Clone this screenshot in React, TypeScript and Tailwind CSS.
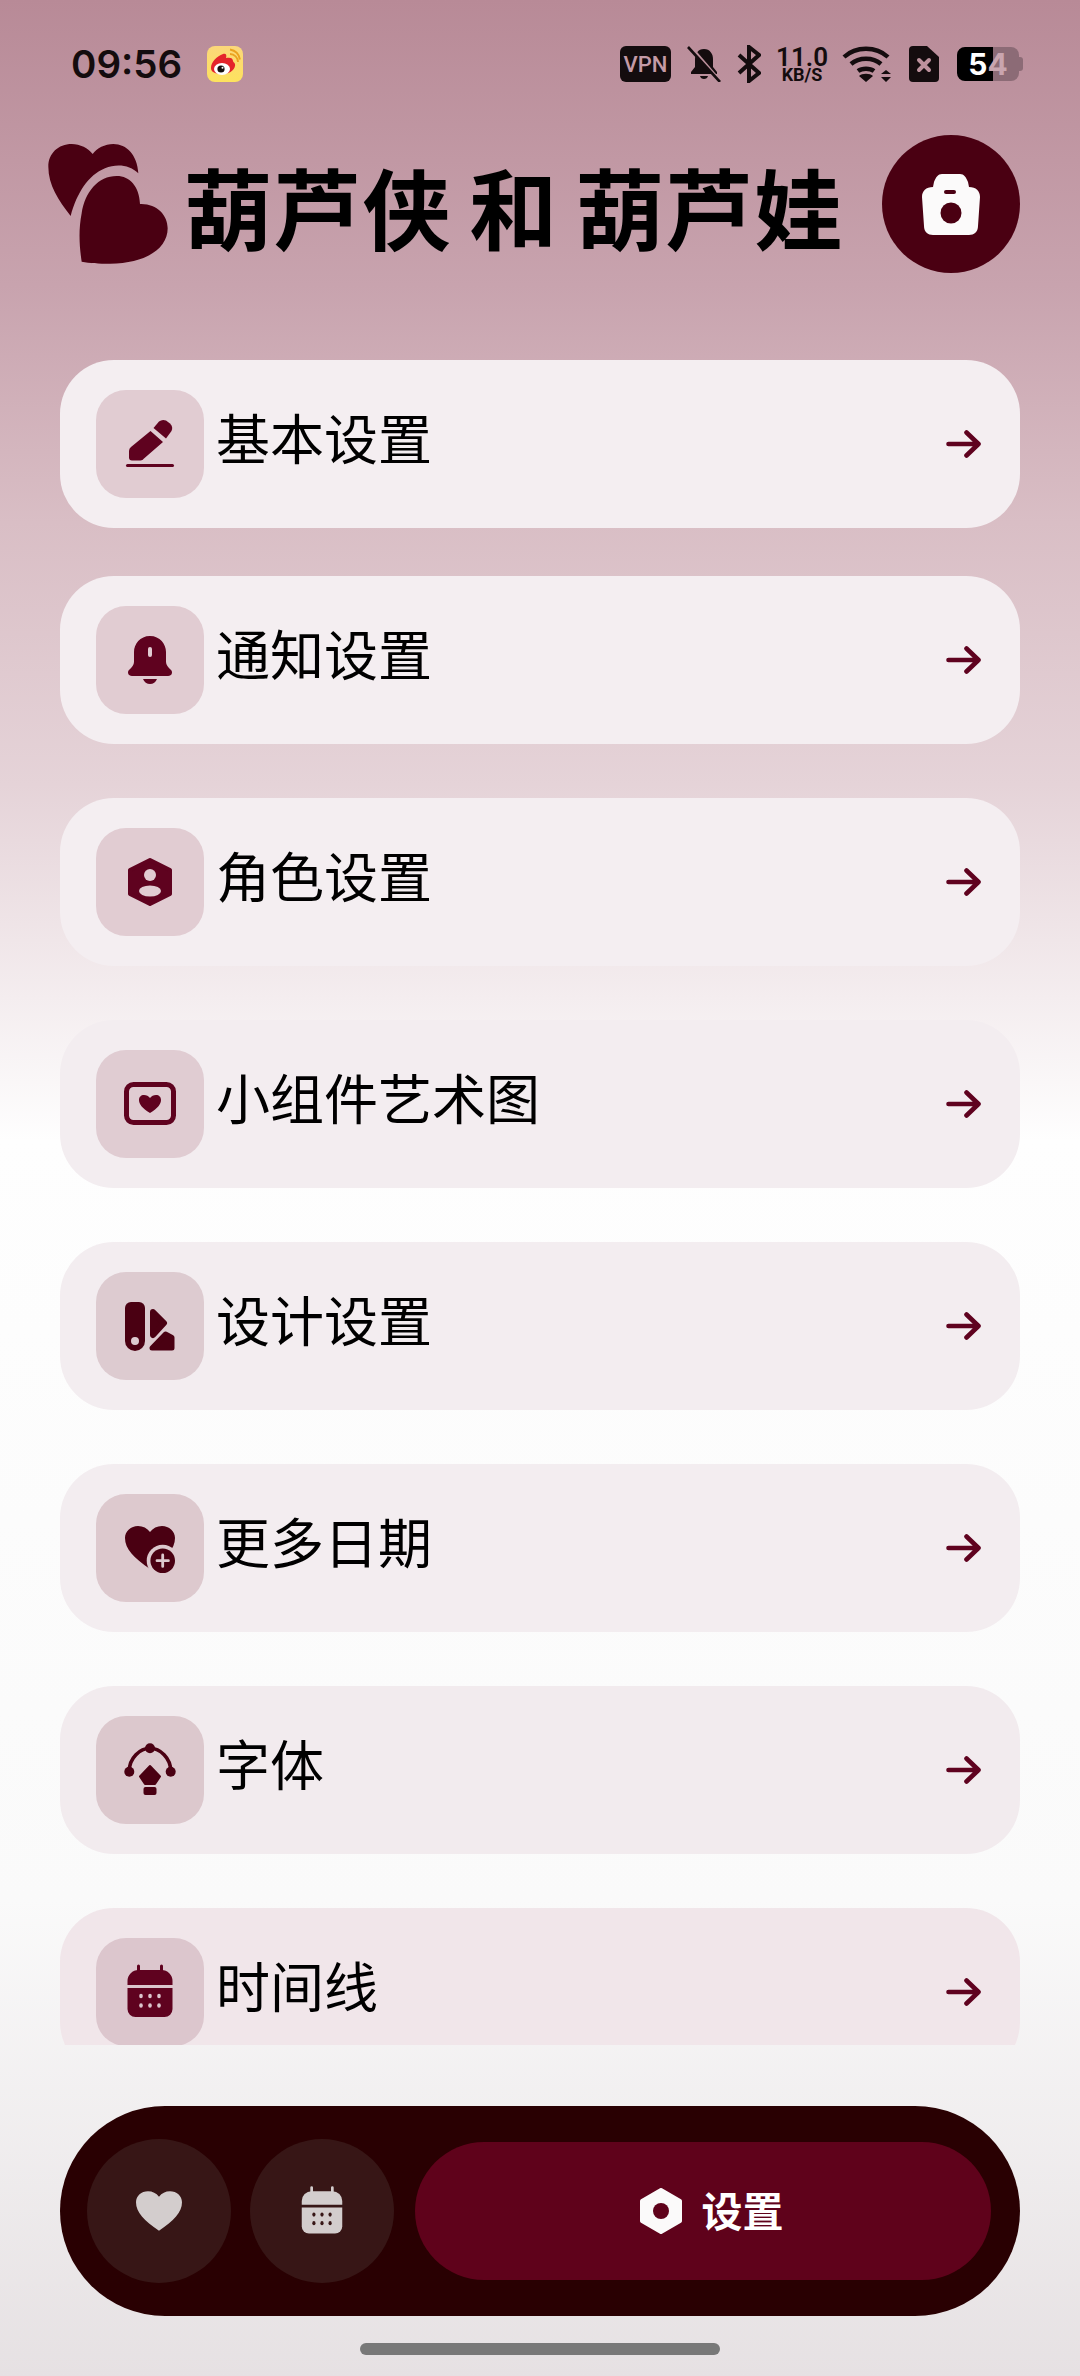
import React from 'react';

const ICON = '#5f021f';

function Svg({ children, size = 60 }: { children: React.ReactNode; size?: number }) {
  return (
    <svg width={size} height={size} viewBox="-6 -6 60 60" className="shrink-0">
      {children}
    </svg>
  );
}

function PencilIcon() {
  return (
    <Svg>
      <path fill={ICON} d="M6 40.500a3 3 0 0 1-3-3V31a5 5 0 0 1 2-4L24.500 11 37 22 18 38.500a5 5 0 0 1-3.500 2z" />
      <path fill={ICON} d="M27.500 8L33 1.500Q36-1 40 .5L44 3.500Q47.500 7 45.500 11L40 18.500z" />
      <rect x="0" y="44" width="48" height="3" rx="1.500" fill={ICON} />
    </Svg>
  );
}

function BellIcon({ hole }: { hole: string }) {
  return (
    <Svg>
      <path fill={ICON} d="M24 0C14 0 8 8 8 16v10c0 3-2 5-5 8-2 2-1 6 3 6h36c4 0 5-4 3-6-3-3-5-5-5-8V16C40 8 34 0 24 0z" />
      <rect x="22" y="11" width="4" height="10" rx="2" fill={hole} />
      <path fill={ICON} d="M17 43h14c-1 3-4 5-7 5s-6-2-7-5z" />
    </Svg>
  );
}

function RoleIcon({ hole }: { hole: string }) {
  return (
    <Svg>
      <path fill={ICON} stroke={ICON} strokeWidth="4" strokeLinejoin="round" d="M24 2 L44 12 V36 L24 46 L4 36 V12z" />
      <circle cx="24" cy="17" r="6" fill={hole} />
      <ellipse cx="24" cy="33" rx="11" ry="5.500" fill={hole} />
    </Svg>
  );
}

function WidgetIcon() {
  return (
    <Svg>
      <rect x="0.5" y="4.500" width="47" height="38" rx="7" fill="none" stroke={ICON} strokeWidth="5" />
      <path fill={ICON} d="M24 33c-8-5-11-9-11-13 0-3 2-5 5-5 2.500 0 4.500 1 6 3 1.500-2 3.500-3 6-3 3 0 5 2 5 5 0 4-3 8-11 13z" />
    </Svg>
  );
}

function PaletteIcon({ hole }: { hole: string }) {
  return (
    <Svg>
      <path fill="#4a0012" d="M5 0h8a6 6 0 0 1 6 6v33a10 10 0 0 1-20 0V6a6 6 0 0 1 6-6z" />
      <circle cx="9" cy="39" r="4" fill={hole} />
      <path fill="#4a0012" stroke="#4a0012" strokeWidth="6" strokeLinejoin="round" d="M27 10L38 21 27 33z" />
      <path fill="#4a0012" stroke="#4a0012" strokeWidth="5" strokeLinejoin="round" d="M26 46L39.500 32 46 35.500V46z" />
    </Svg>
  );
}

function HeartPlusIcon({ hole }: { hole: string }) {
  return (
    <Svg>
      <path fill="#4a0012" d="M24 45C8 34-1 25-1 14-1 7 5 2 12 2c5 0 9 2 12 6 3-4 7-6 12-6 7 0 13 5 13 12 0 11-9 20-25 31z" />
      <circle cx="36.700" cy="36.700" r="16" fill={hole} />
      <circle cx="36.700" cy="36.700" r="12.300" fill="#4a0012" />
      <path stroke={hole} strokeWidth="2.800" strokeLinecap="round" d="M31 36.700h11.400M36.700 31v11.400" />
    </Svg>
  );
}

function FontIcon() {
  return (
    <Svg>
      <path fill="none" stroke="#4a0012" strokeWidth="3.600" d="M3.300 25C3.300 12 14 2.300 24 2.300S44.700 12 44.700 25" />
      <circle cx="24" cy="2.300" r="5" fill="#4a0012" />
      <circle cx="3.300" cy="25.700" r="5" fill="#4a0012" />
      <circle cx="44.700" cy="25.700" r="5" fill="#4a0012" />
      <path fill="#4a0012" stroke="#4a0012" strokeWidth="2" strokeLinejoin="round" d="M24 20L34 30.500 29 38H19L14 30.500z" />
      <rect x="17.500" y="41" width="13" height="8" rx="2" fill="#4a0012" />
    </Svg>
  );
}

function CalendarIcon({ color, hole, size = 60 }: { color: string; hole: string; size?: number }) {
  return (
    <Svg size={size}>
      <path stroke={color} strokeWidth="3" strokeLinecap="round" d="M12.500-2v6M35.500-2v6" />
      <path fill={color} d="M1.500 17v-4a11 11 0 0 1 11-11h23a11 11 0 0 1 11 11v4z" />
      <path fill={color} d="M1.500 20h45v21a8 8 0 0 1-8 8h-29a8 8 0 0 1-8-8z" />
      {[15, 24, 33].map((x) => (
        <React.Fragment key={x}>
          <ellipse cx={x} cy="28" rx="1.800" ry="2.300" fill={hole} />
          <ellipse cx={x} cy="37.500" rx="1.800" ry="2.300" fill={hole} />
        </React.Fragment>
      ))}
    </Svg>
  );
}

function ArrowRight() {
  return (
    <svg width="36" height="28" viewBox="0 0 36 28" fill="none" stroke={ICON} strokeWidth="4.600" strokeLinecap="round" strokeLinejoin="round" className="shrink-0">
      <path d="M2.500 14h30M20.500 2.500L32.500 14 20.500 25.500" />
    </svg>
  );
}

const items = [
  { label: '基本设置', card: 'bg-[#f4eef1]', box: 'bg-[#e1ccd2]', hole: '#e1ccd2', icon: 'pencil' },
  { label: '通知设置', card: 'bg-[#f4eef1]', box: 'bg-[#e1ccd2]', hole: '#e1ccd2', icon: 'bell' },
  { label: '角色设置', card: 'bg-[#f4eef1]', box: 'bg-[#e1ccd2]', hole: '#e1ccd2', icon: 'role' },
  { label: '小组件艺术图', card: 'bg-[#f3edf0]', box: 'bg-[#e0ccd2]', hole: '#e0ccd2', icon: 'widget' },
  { label: '设计设置', card: 'bg-[#f3edf0]', box: 'bg-[#ddcbd0]', hole: '#ddcbd0', icon: 'palette' },
  { label: '更多日期', card: 'bg-[#f3edf0]', box: 'bg-[#ddc9ce]', hole: '#ddc9ce', icon: 'heart' },
  { label: '字体', card: 'bg-[#f2ebee]', box: 'bg-[#dcc8cd]', hole: '#dcc8cd', icon: 'font' },
  { label: '时间线', card: 'bg-[#f1e6ea]', box: 'bg-[#dcc6cd]', hole: '#dcc6cd', icon: 'calendar' },
];

function ItemIcon({ icon, hole }: { icon: string; hole: string }) {
  switch (icon) {
    case 'pencil':
      return <PencilIcon />;
    case 'bell':
      return <BellIcon hole={hole} />;
    case 'role':
      return <RoleIcon hole={hole} />;
    case 'widget':
      return <WidgetIcon />;
    case 'palette':
      return <PaletteIcon hole={hole} />;
    case 'heart':
      return <HeartPlusIcon hole={hole} />;
    case 'font':
      return <FontIcon />;
    default:
      return <CalendarIcon color={ICON} hole={hole} />;
  }
}

function WeiboIcon() {
  return (
    <svg width="36" height="36" viewBox="0 0 36 36" className="shrink-0">
      <defs>
        <linearGradient id="wb" x1="0" y1="0" x2="0" y2="1">
          <stop offset="0" stopColor="#fbd77a" />
          <stop offset="1" stopColor="#fde25e" />
        </linearGradient>
      </defs>
      <rect width="36" height="36" rx="8" fill="url(#wb)" />
      <path fill="#e4242a" d="M4 22c0-6 6-12 12-14 3-1 4 1 3 4 4-1 7 0 7 3 0 1 1 1 2 3 1 4-4 10-12 10S4 26 4 22z" />
      <ellipse cx="15" cy="23" rx="8" ry="6" fill="#fff" />
      <circle cx="14" cy="23" r="3.600" fill="#16100f" />
      <circle cx="15.500" cy="21.700" r="1" fill="#fff" />
      <path fill="none" stroke="#eba21f" strokeWidth="1.800" d="M23 8a8 8 0 0 1 8 8M23 3.500a12.500 12.500 0 0 1 10 10" />
    </svg>
  );
}

function StatusBar() {
  return (
    <div className="mt-[46px] flex h-[36px] items-center pl-[71px] pr-[57px] font-['Inter',sans-serif] text-[#140c0e]">
      <span className="w-[136px] text-[38.5px] font-semibold leading-none">09:56</span>
      <WeiboIcon />
      <div className="ml-auto flex items-center">
        <div className="flex h-[36px] w-[51px] items-center justify-center rounded-[6px] bg-[#140c0e] font-['Roboto',sans-serif] text-[22px] font-medium text-[#c49aa6]">
          VPN
        </div>
        <svg width="36" height="36" viewBox="0 0 36 36" className="ml-[15px]">
          <path fill="#140c0e" d="M18 3c-6 0-9 5-9 10v8l-4 5v2h26v-2l-4-5v-8c0-5-3-10-9-10z" />
          <path fill="#140c0e" d="M14 30h8c-.5 2-2 3-4 3s-3.500-1-4-3z" />
          <path stroke="#bd919d" strokeWidth="3" d="M4 0l30 35" />
          <path stroke="#140c0e" strokeWidth="2.600" d="M2 1l32 35" />
        </svg>
        <svg width="24" height="38" viewBox="0 0 24 38" fill="none" stroke="#140c0e" strokeWidth="4" className="ml-[15px]">
          <path d="M2 10l20 18-10 8V2l10 8L2 28" />
        </svg>
        <div className="ml-[16px] flex w-[50px] flex-col items-center font-['Roboto',sans-serif] font-semibold">
          <span className="text-[26px] leading-[22px]">11.0</span>
          <span className="text-[18px] font-bold leading-[14px]">KB/S</span>
        </div>
        <svg width="52" height="36" viewBox="0 0 52 36" fill="none" stroke="#140c0e" strokeWidth="4.400" className="ml-[15px]">
          <path d="M2 11c12-11 32-11 44 0M9 18c8-7 22-7 30 0M16 25c4-3 12-3 16 0" />
          <path fill="#140c0e" stroke="none" d="M24 36l-7-6c3-3 11-3 14 0zM44 24l5 4h-10zM44 36l-5-5h10z" />
        </svg>
        <svg width="30" height="36" viewBox="0 0 30 36" className="ml-[15px]">
          <path fill="#140c0e" d="M4 0h14l12 11v21a4 4 0 0 1-4 4H4a4 4 0 0 1-4-4V4a4 4 0 0 1 4-4z" />
          <path stroke="#bd919d" strokeWidth="4" strokeLinecap="round" d="M10 14l10 10M20 14L10 24" />
        </svg>
        <div className="ml-[18px] flex h-[34px] w-[62px] items-center justify-center rounded-[8px] bg-[linear-gradient(90deg,#000_58%,#8c6b76_58%)] text-[30px] font-bold leading-none">
          <span className="text-white">5</span>
          <span className="text-[#c9a5af]">4</span>
        </div>
        <div className="h-[14px] w-[4px] rounded-r-[3px] bg-[#8c6b76]" />
      </div>
    </div>
  );
}

function Header() {
  return (
    <div className="mt-[53px] flex h-[138px] items-center pl-[48px] pr-[60px]">
      <svg width="120" height="120" viewBox="54 72 360 360" className="shrink-0">
        <path fill="#4a0012" d="M122 288C85 240 55 195 55 140 55 100 85 72 125 72c25 0 50 13 63 30 12-17 37-30 62-30 40 0 72 33 75 88-25-25-65-30-100-15-50 20-85 75-103 143z" />
        <path fill="#4a0012" d="M155 425c-7-45-10-95 0-145 10-65 50-112 105-112 40 0 68 32 70 84 50-2 83 33 83 73 0 60-63 105-173 106-35 0-60-1-85-6z" />
      </svg>
      <h1 className="ml-[16px] whitespace-pre pt-[2px] text-[88px] font-bold leading-none tracking-[1.3px] text-black [word-spacing:-4px]">
        葫芦侠 和 葫芦娃
      </h1>
      <div className="ml-auto flex h-[138px] w-[138px] items-center justify-center rounded-full bg-[#4a0012]">
        <svg width="58" height="61" viewBox="0 0 58 61">
          <path fill="#fbfafa" d="M20 0h18c4 0 6 3 8 8l1 5c7 0 11 4 11 10l-2 29c0 6-4 9-9 9H11c-5 0-9-3-9-9L0 23c0-6 4-10 11-10l1-5c2-5 4-8 8-8z" />
          <rect x="22" y="16" width="12" height="4" rx="2" fill="#4a0012" />
          <circle cx="29" cy="39" r="10.500" fill="#4a0012" />
        </svg>
      </div>
    </div>
  );
}

function BottomNav() {
  return (
    <div className="mx-[60px] mt-[61px] flex h-[210px] items-center rounded-full bg-[#290002] pl-[27px]">
      <div className="flex h-[144px] w-[144px] items-center justify-center rounded-full bg-[#371616]">
        <svg width="46" height="40" viewBox="-1 2 50 43">
          <path fill="#d3cdcd" d="M24 45C8 34-1 25-1 14-1 7 5 2 12 2c5 0 9 2 12 6 3-4 7-6 12-6 7 0 13 5 13 12 0 11-9 20-25 31z" />
        </svg>
      </div>
      <div className="ml-[19px] flex h-[144px] w-[144px] items-center justify-center rounded-full bg-[#371616]">
        <CalendarIcon color="#d3cdcd" hole="#371616" size={54} />
      </div>
      <div className="ml-[21px] flex h-[138px] w-[576px] items-center justify-center gap-[20px] rounded-full bg-[#5f021b] pl-[17px]">
        <svg width="42" height="46" viewBox="0 0 42 46">
          <path fill="#fbfafa" stroke="#fbfafa" strokeWidth="4" strokeLinejoin="round" d="M21 2L40 13V33L21 44 2 33V13z" />
          <circle cx="21" cy="23" r="8" fill="#5f021b" />
        </svg>
        <span className="mb-[3px] text-[41px] font-bold leading-none text-white">设置</span>
      </div>
    </div>
  );
}

export default function App() {
  return (
    <div className="flex h-[2376px] w-[1080px] flex-col overflow-hidden bg-[linear-gradient(180deg,#b88a97_0%,#c8a3ae_12%,#d9bec5_22%,#e5d3d8_33%,#f4edef_42%,#fefefe_48%,#fafafa_80%,#e6e1e3_100%)] font-['Noto_Sans_CJK_SC','Noto_Sans',sans-serif]">
      <StatusBar />
      <Header />
      <div className="mt-[87px] flex h-[1685px] flex-col gap-[54px] overflow-hidden px-[60px]">
        {items.map((item) => (
          <div
            key={item.label}
            className={`flex h-[168px] shrink-0 items-center rounded-[54px] pl-[36px] pr-[38px] first:mb-[-6px] ${item.card}`}
          >
            <div className={`flex h-[108px] w-[108px] shrink-0 items-center justify-center rounded-[30px] ${item.box}`}>
              <ItemIcon icon={item.icon} hole={item.hole} />
            </div>
            <span className="mb-[15px] ml-[12px] text-[54px] leading-none text-black">{item.label}</span>
            <div className="ml-auto">
              <ArrowRight />
            </div>
          </div>
        ))}
      </div>
      <BottomNav />
      <div className="mx-auto mt-[27px] h-[12px] w-[360px] rounded-full bg-[#787878]" />
    </div>
  );
}
